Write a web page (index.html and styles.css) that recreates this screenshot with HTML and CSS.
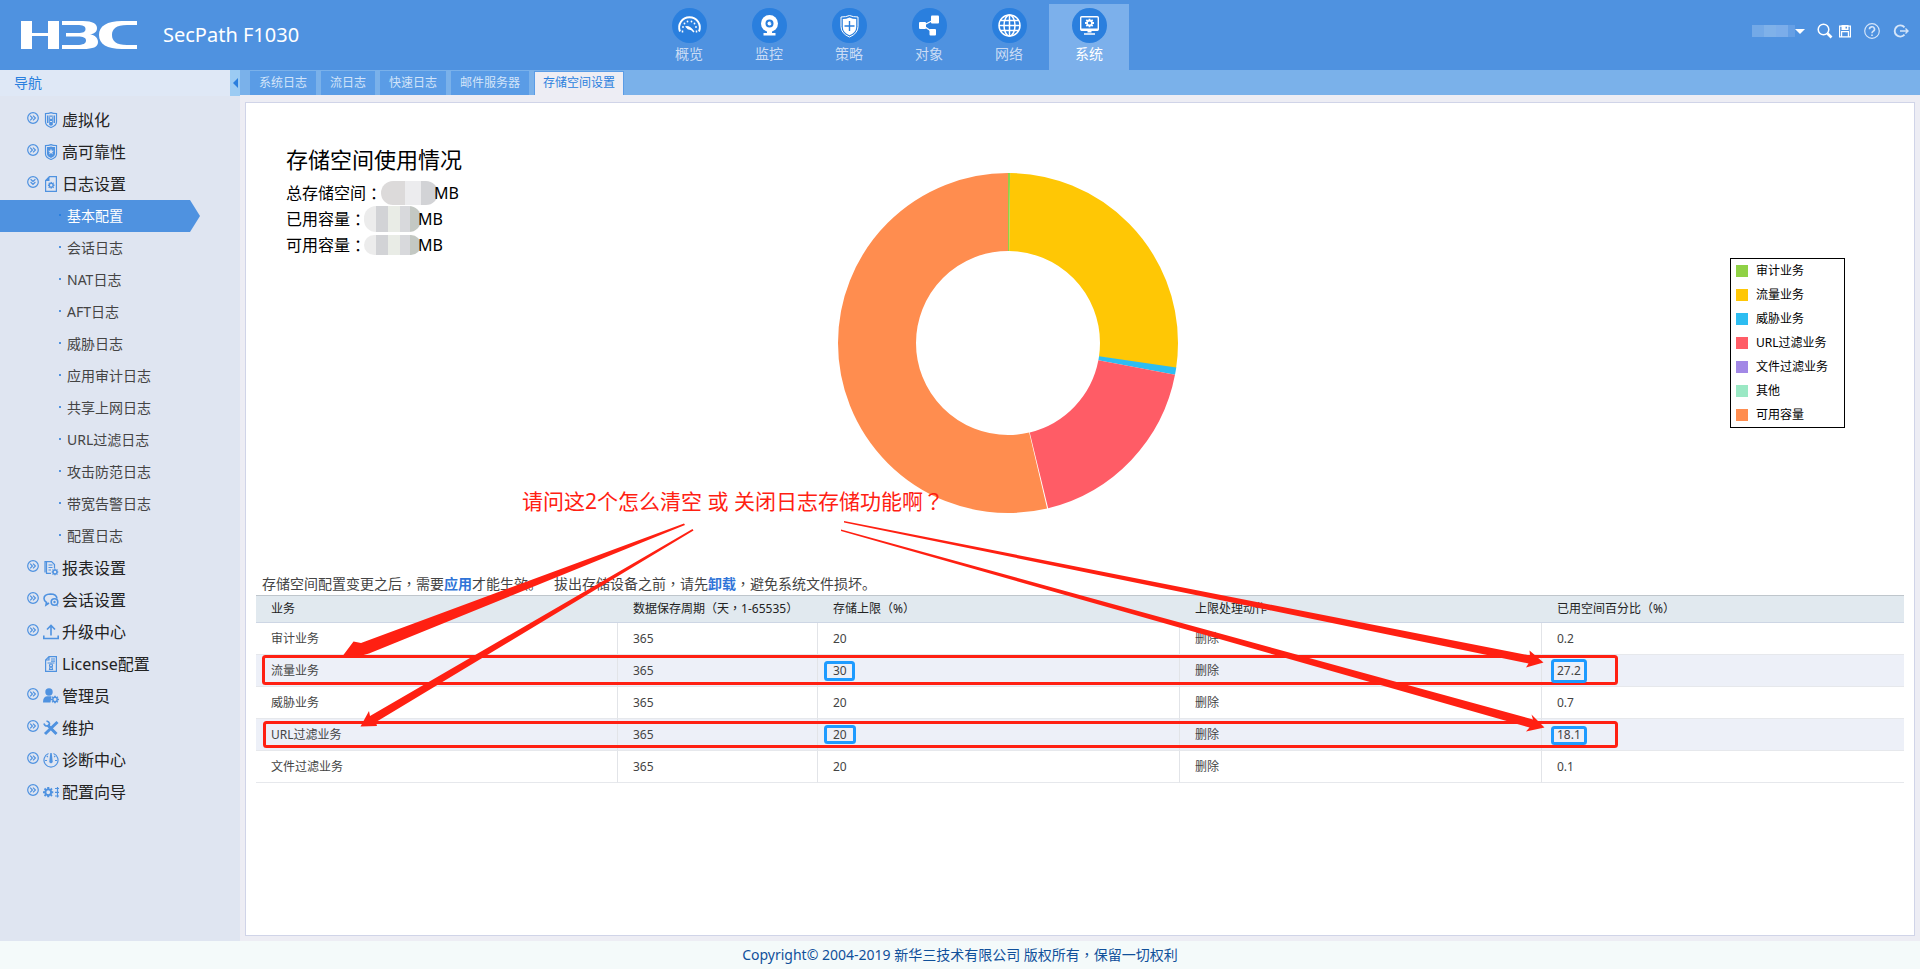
FILE: index.html
```
<!DOCTYPE html>
<html lang="zh-CN">
<head>
<meta charset="utf-8">
<title>SecPath F1030</title>
<link rel="stylesheet" href="styles.css">
</head>
<body>
<svg class="defs" aria-hidden="true">
  <symbol id="more" viewBox="0 0 12 12"><circle cx="6" cy="6" r="5.300"/><path d="M3.200 3.600 5.400 6 3.200 8.400M6 3.600 8.400 6 6 8.400"/></symbol>
  <symbol id="gear" viewBox="0 0 10 10"><path fill-rule="evenodd" d="M4 0h2v1.400l.9.4 1-1 1.300 1.300-1 1 .4.9H10v2H8.600l-.4.9 1 1-1.300 1.300-1-1-.9.4V10H4V8.600l-.9-.4-1 1L.8 7.900l1-1L1.400 6H0V4h1.400l.4-.9-1-1L2.100.8l1 1 .9-.4zM5 3.200a1.800 1.800 0 1 0 0 3.600 1.800 1.800 0 0 0 0-3.600z"/></symbol>
</svg>

<header class="topbar">
  <div class="brand">
    <svg class="logo" viewBox="0 0 116 28" role="img" aria-label="H3C">
      <rect width="11" height="28"/><rect x="27" width="11" height="28"/><rect x="11" y="12" width="16" height="3"/>
      <path d="M41 0H62C72 0 76 3 76 7 76 11 73 13 69 13.500 74 14 77 17 77 21 77 26 72 28 62 28H41V24H56C62 24 65 22.500 65 19.500 65 16.500 62 15.500 57 15.500H45V12H57C62 12 64.500 11 64.500 8 64.500 5 62 4 56 4H41Z"/>
      <path d="M116 0H101C86 0 78 5 78 14 78 23 86 28 101 28H116V24H106C95 24 91 20 91 14 91 8 95 4 106 4H116Z"/>
    </svg>
    <span class="model">SecPath F1030</span>
  </div>
  <nav class="mainnav" aria-label="主菜单">
    <a href="#"><svg viewBox="0 0 35 35"><circle class="disc" cx="17.500" cy="17.500" r="17.500"/><path class="ln" d="M8 23.500A10.300 10.300 0 1 1 27 23.500" stroke-width="2"/><path class="ln" d="M10.500 24.500v-2M24.500 24.500v-2" stroke-width="1.500"/><path class="ln" d="M11 19h0M12.500 15.500h0M15.500 13.500h0M19.500 13.500h0M22.500 15.500h0M24 19h0" stroke-width="1.800" stroke-linecap="round"/><path class="fl" d="M13 18.500q4-2 9.500 5l-1 1q-2.500-3.500-5.500-3z"/></svg>概览</a>
    <a href="#"><svg viewBox="0 0 35 35"><circle class="disc" cx="17.500" cy="17.500" r="17.500"/><circle class="fl" cx="17.500" cy="15.500" r="8.500"/><circle class="bl" cx="17.500" cy="15.500" r="4"/><circle class="fl" cx="17.500" cy="15.500" r="2"/><path class="bl" d="m18 15 3-2v3z"/><path class="fl" d="M15 23h5v2h3.500v2.500h-12V25H15z"/></svg>监控</a>
    <a href="#"><svg viewBox="0 0 35 35"><circle class="disc" cx="17.500" cy="17.500" r="17.500"/><path class="ln" d="M17.500 7.500Q21 9 26 9v9.500q0 7-8.500 10.500Q9 25.500 9 18.500V9q5 0 8.500-1.500z" stroke-width="1"/><path class="fl" d="M17.500 9.500Q21 11 24.200 11v8q0 5.500-6.700 8.300-6.700-2.800-6.700-8.300v-8Q14 11 17.500 9.500z"/><path d="M17.500 13v10M12.500 18h10" stroke="#2a7fde" stroke-width="1.400"/></svg>策略</a>
    <a href="#"><svg viewBox="0 0 35 35"><circle class="disc" cx="17.500" cy="17.500" r="17.500"/><path class="ln" d="M22.500 11.500 11 17.500 20.500 24" stroke-width="1.300"/><rect class="fl" x="19" y="7.500" width="8" height="8" rx="1"/><rect class="fl" x="7" y="14" width="7" height="7" rx="1"/><rect class="fl" x="17.500" y="21" width="6.500" height="6.500" rx="1"/></svg>对象</a>
    <a href="#"><svg viewBox="0 0 35 35"><circle class="disc" cx="17.500" cy="17.500" r="17.500"/><g class="ln" stroke-width="1.500"><circle cx="17.500" cy="17.500" r="10.500"/><ellipse cx="17.500" cy="17.500" rx="5.500" ry="10.500"/><path d="M17.500 7v21M7 17.500h21M9 12.500h17M9 22.500h17"/></g></svg>网络</a>
    <a href="#" class="on" aria-current="page"><svg viewBox="0 0 35 35"><circle class="disc" cx="17.500" cy="17.500" r="17.500"/><rect class="ln" x="8.700" y="8.700" width="17.600" height="13.600" rx="1" stroke-width="1.400"/><path class="fl" d="M9 20.500h17v2H9zM15.500 22h4v2.500h-4zM12 25.300h11v1.500H12z"/><use class="fl" href="#gear" x="13" y="10.500" width="9" height="9"/></svg>系统</a>
  </nav>
  <div class="tools">
    <button class="user" aria-label="用户"><i class="masked"></i><svg width="10" height="5" viewBox="0 0 10 5"><path class="fl" d="M0 0h10L5 5z"/></svg></button>
    <button aria-label="搜索" class="search"><svg width="16" height="16" viewBox="0 0 16 16"><g class="ln"><circle cx="6.500" cy="6.500" r="5.300" stroke-width="1.500"/><path d="m10.500 10.500 4 4" stroke-width="2.600"/></g></svg></button>
    <button aria-label="保存"><svg width="12" height="13" viewBox="0 0 12 13"><path class="ln" d="M.6 1.100h10.800v10.800H.6zM2.600 12V6.600h6.800V12" stroke-width="1.200"/><path class="fl" fill-rule="evenodd" d="M2.500 0h7v5h-7zM6.500 1v2.500H8V1z"/></svg></button>
    <button aria-label="帮助" class="wide"><svg width="16" height="16" viewBox="0 0 16 16"><g class="ln pale"><circle cx="8" cy="8" r="7.300" stroke-width="1.200"/><path d="M5.500 6.300a2.500 2.400 0 1 1 3.700 2Q8 9 8 10.300M8 11.400v1.500" stroke-width="1.600"/></g></svg></button>
    <button aria-label="退出" class="wide"><svg width="16" height="14" viewBox="0 0 16 14"><g class="ln pale"><path d="M11.500 3.300a5.600 5.600 0 1 0 0 7.400" stroke-width="1.900"/><path d="M7 7h8M12.500 4.500 15 7l-2.500 2.500" stroke-width="1.400"/></g></svg></button>
  </div>
</header>

<div class="body">
  <aside class="sidebar">
    <div class="sidehead"><span>导航</span><button class="fold" aria-label="收起导航"><svg width="5" height="10" viewBox="0 0 5 10"><path d="M5 0v10L0 5z"/></svg></button></div>
    <nav class="tree" aria-label="导航">
      <a href="#" class="top"><svg class="more"><use href="#more"/></svg><svg class="ico" viewBox="0 0 16 16"><path class="st" d="M2.500 1.500Q6 1.500 8 .6q2 .9 5.500.9V10q0 3.500-5.500 5.500Q2.500 13.500 2.500 10z"/><path d="M4 3.500h1.500V11H4zM6.200 3.500h3.600V13l-1.800.8-1.800-.8zM10.500 3.500H12V11h-1.500z"/><path class="bgst" d="M7 4.500 8 7l1-2.500M7 9.500h2"/></svg>虚拟化</a>
      <a href="#" class="top"><svg class="more"><use href="#more"/></svg><svg class="ico" viewBox="0 0 16 16"><path class="st" d="M2.500 1.500Q6 1.500 8 .6q2 .9 5.500.9V10q0 3.500-5.500 5.500Q2.500 13.500 2.500 10z"/><path fill-rule="evenodd" d="M4 3q2.500 0 4-.6Q9.500 3 12 3v7q0 2.300-4 4-4-1.700-4-4zm4 1.500L7.200 6.800H5l1.800 1.400-.7 2.300L8 9.100l1.900 1.400-.7-2.300L11 6.800H8.800z"/></svg>高可靠性</a>
      <a href="#" class="top open"><svg class="more"><use href="#more"/></svg><svg class="ico" viewBox="0 0 16 16"><path class="st" d="M6.500.6h6.900v14.800H2.600V4.500z"/><path d="M2 5 6.500 0v5z"/><use href="#gear" x="4.700" y="5.700" width="7" height="7"/></svg>日志设置</a>
      <a href="#" class="sub on" aria-current="page">基本配置</a>
      <a href="#" class="sub">会话日志</a>
      <a href="#" class="sub">NAT日志</a>
      <a href="#" class="sub">AFT日志</a>
      <a href="#" class="sub">威胁日志</a>
      <a href="#" class="sub">应用审计日志</a>
      <a href="#" class="sub">共享上网日志</a>
      <a href="#" class="sub">URL过滤日志</a>
      <a href="#" class="sub">攻击防范日志</a>
      <a href="#" class="sub">带宽告警日志</a>
      <a href="#" class="sub">配置日志</a>
      <a href="#" class="top"><svg class="more"><use href="#more"/></svg><svg class="ico" viewBox="0 0 16 16"><path class="st" d="M8 13.400H3.500V1.600H2v10.800M3.500 1.600h5l3 3v4M5.500 5h4M5.500 7.500h4M5.500 10h2.500"/><use href="#gear" x="8.500" y="8.500" width="7" height="7"/></svg>报表设置</a>
      <a href="#" class="top"><svg class="more"><use href="#more"/></svg><svg class="ico" viewBox="0 0 16 16"><path class="st bold" d="M14 6.500Q13.500 2 7.500 2 1 2.300 1 6.500q0 2.500 2.500 4L3 13l3-2"/><circle class="st bold" cx="11.500" cy="10" r="3.300"/><circle cx="11.500" cy="10" r="1.200"/><path d="m13 12 2.500 2.500-1.500-.2z"/></svg>会话设置</a>
      <a href="#" class="top"><svg class="more"><use href="#more"/></svg><svg class="ico" viewBox="0 0 16 16"><path class="st bold" d="M8 11.500V2M4 5.500l4-4 4 4M.8 11.500v3h14.400v-3"/></svg>升级中心</a>
      <a href="#" class="top leaf"><svg class="ico" viewBox="0 0 16 16"><path class="st" d="M6 .6h7.400v14.800H2.600V4zM6 .6V4H2.600M8 3h4M8 5.200h4M4.500 7h7"/><circle class="st" cx="8" cy="9.500" r="1.500"/><path class="st" d="M6.500 13.500 7 11h2l.5 2.500z"/></svg>License配置</a>
      <a href="#" class="top"><svg class="more"><use href="#more"/></svg><svg class="ico" viewBox="0 0 16 16"><circle cx="6" cy="4" r="3.700"/><path d="M0 14.500Q0 8.500 4 8.300h4.500L7.500 14.500z"/><use href="#gear" x="8" y="7.500" width="8" height="8"/></svg>管理员</a>
      <a href="#" class="top"><svg class="more"><use href="#more"/></svg><svg class="ico" viewBox="0 0 16 16"><path class="st fat" d="M2 14 14.500 2M4.500 5l9 9"/><path class="st bold" d="M1 3.500Q1.500 6 4 6T6.500 3.500Q6 1.500 3.500 1"/></svg>维护</a>
      <a href="#" class="top"><svg class="more"><use href="#more"/></svg><svg class="ico" viewBox="0 0 16 16"><path class="st" d="M5.500 1.500a7 7 0 1 0 5 0M2 8.500h2M12 8.500h2M3.800 4l1 1M12.200 4l-1 1"/><path d="M7.300 1h1.400l1 8.500a1.700 1.700 0 1 1-3.400 0z"/></svg>诊断中心</a>
      <a href="#" class="top"><svg class="more"><use href="#more"/></svg><svg class="ico" viewBox="0 0 16 16"><use href="#gear" x="0" y="3" width="10.500" height="10.500"/><path class="st" d="M14.500 3v10.500M12 4.500h4M12 8.300h4M12 12h4"/></svg>配置向导</a>
    </nav>
  </aside>

  <main class="main">
    <nav class="tabs" aria-label="标签">
      <a href="#">系统日志</a><a href="#">流日志</a><a href="#">快速日志</a><a href="#">邮件服务器</a><a href="#" class="on" aria-current="page">存储空间设置</a>
    </nav>
    <section class="panel">
      <div class="overview">
        <div class="usage">
          <div class="info">
            <h1>存储空间使用情况</h1>
            <p>总存储空间<span class="pt" lang="zh-TW">：</span><i class="mosaic first"></i>MB</p>
            <p>已用容量<span class="pt" lang="zh-TW">：</span><i class="mosaic"></i>MB</p>
            <p>可用容量<span class="pt" lang="zh-TW">：</span><i class="mosaic third"></i>MB</p>
          </div>
          <svg class="donut" viewBox="0 0 340 340" role="img" aria-label="存储空间使用情况">
            <g fill="none" stroke-width="78" transform="rotate(-90 170 170)">
              <circle cx="170" cy="170" r="131" pathLength="100" stroke="#ffc705" stroke-dasharray="27.200 100" stroke-dashoffset="-.2"/>
              <circle cx="170" cy="170" r="131" pathLength="100" stroke="#2dbdf1" stroke-dasharray=".7 100" stroke-dashoffset="-27.300"/>
              <circle cx="170" cy="170" r="131" pathLength="100" stroke="#ff5c66" stroke-dasharray="18.200 100" stroke-dashoffset="-28"/>
              <circle cx="170" cy="170" r="131" pathLength="100" stroke="#ff8d4f" stroke-dasharray="53.700 100" stroke-dashoffset="-46.300"/>
              <circle cx="170" cy="170" r="131" pathLength="100" stroke="#8fd145" stroke-dasharray=".2 100"/>
            </g>
          </svg>
        </div>
        <ul class="legend">
          <li class="c1">审计业务</li><li class="c2">流量业务</li><li class="c3">威胁业务</li><li class="c4">URL过滤业务</li><li class="c5">文件过滤业务</li><li class="c6">其他</li><li class="c7">可用容量</li>
        </ul>
      </div>
      <div class="storage">
        <p class="note"><span>存储空间配置变更之后<span class="pt" lang="zh-TW">，</span>需要<a href="#">应用</a>才能生效。</span><span>拔出存储设备之前<span class="pt" lang="zh-TW">，</span>请先<a href="#">卸载</a><span class="pt" lang="zh-TW">，</span>避免系统文件损坏。</span></p>
        <table>
          <thead><tr><th>业务</th><th class="days">数据保存周期<span class="pt" lang="zh-TW">（</span>天<span class="pt" lang="zh-TW">，</span>1-65535<span class="pt" lang="zh-TW">）</span></th><th>存储上限<span class="pt" lang="zh-TW">（</span>%<span class="pt" lang="zh-TW">）</span></th><th>上限处理动作</th><th>已用空间百分比<span class="pt" lang="zh-TW">（</span>%<span class="pt" lang="zh-TW">）</span></th></tr></thead>
          <tbody>
            <tr><td>审计业务</td><td>365</td><td>20</td><td>删除</td><td>0.2</td></tr>
            <tr><td>流量业务</td><td>365</td><td>30</td><td>删除</td><td>27.2</td></tr>
            <tr><td>威胁业务</td><td>365</td><td>20</td><td>删除</td><td>0.7</td></tr>
            <tr><td>URL过滤业务</td><td>365</td><td>20</td><td>删除</td><td>18.1</td></tr>
            <tr><td>文件过滤业务</td><td>365</td><td>20</td><td>删除</td><td>0.1</td></tr>
          </tbody>
        </table>
      </div>
    </section>
  </main>
</div>
<footer class="foot">Copyright© 2004-2019 新华三技术有限公司 版权所有<span class="pt" lang="zh-TW">，</span>保留一切权利</footer>

<div class="markup">
  <svg class="arrows" aria-hidden="true">
    <g class="redbox"><rect x="263.500" y="656.500" width="1353" height="27" rx="2"/><rect x="264.500" y="722.500" width="1352" height="24" rx="2"/></g>
    <g class="redfill">
      <path d="M684 523.500 361 643 353.500 641.500 343 655.500 360 656 369 653.500 685 525z"/>
      <path d="M692.500 529 370 716 369 711 360.500 726.500 377 726 376 722 693.500 530.500z"/>
      <path d="M844 521 1530 655.500 1529.500 650.500 1543.500 662.500 1526 667.500 1528.500 663.500 844 522.500z"/>
      <path d="M841 529.500 1533 719.500 1531.500 714.500 1544.500 727.500 1526 731.500 1529.500 727.500 841 531z"/>
    </g>
    <g class="bluebox"><rect x="825.500" y="662.500" width="28" height="17" rx="2"/><rect x="825.500" y="726.500" width="29" height="16" rx="2"/><rect x="1552.500" y="660.500" width="33" height="21" rx="2"/><rect x="1552.500" y="727.500" width="33" height="16" rx="2"/></g>
  </svg>
  <p class="question">请问这2个怎么清空 或 关闭日志存储功能啊<span class="pt" lang="zh-TW">？</span></p>
</div>
</body>
</html>
```
FILE: styles.css
```
* { box-sizing: border-box; }
body {
  margin: 0; min-height: 100vh; position: relative;
  display: flex; flex-direction: column;
  font: 14px/20px "Noto Sans", "Noto Sans CJK SC", sans-serif;
  color: #444; background: #ededf4;
}
a { color: inherit; text-decoration: none; }
button { padding: 0; border: 0; background: none; color: inherit; font: inherit; display: flex; align-items: center; }
svg { display: block; flex: none; }
p, h1, ul { margin: 0; padding: 0; font-weight: normal; }
.defs { position: absolute; width: 0; height: 0; }
.pt { font-family: "Noto Sans CJK TC", sans-serif; line-height: 1; }
.fl { fill: #fff; }
.bl, .disc { fill: #2a7fde; }
.ln { fill: none; stroke: #fff; }
.pale { stroke: #d5e5f9; }

.topbar { height: 70px; background: #4f92e0; display: grid; grid-template-columns: 649fr 480px 791fr; }
.brand { display: flex; align-items: center; gap: 26px; padding-left: 21px; color: #fff; }
.logo { width: 116px; height: 28px; fill: #fff; }
.model { font-size: 20px; line-height: 28px; }
.mainnav { display: flex; padding-top: 4px; }
.mainnav a { width: 80px; display: flex; flex-direction: column; align-items: center; padding-top: 4px; color: #cadcf5; }
.mainnav svg { width: 35px; height: 35px; margin-bottom: 1px; }
.mainnav .on { background: #7cb0eb; color: #fff; }
.tools { display: flex; justify-content: flex-end; align-items: center; gap: 8px; padding: 0 11px 8px 0; }
.tools .user { margin-right: 4px; }
.tools .search { margin-right: -2px; }
.tools .wide { margin-left: 5px; }
.masked { width: 43px; height: 12px; background: linear-gradient(90deg, #73a9e7 12px, #7fb1e9 12px 24px, #7badea 24px 36px, #659fe5 36px); }

.body { flex: 1; display: flex; }
.sidebar { width: 240px; background: #dfe5f1; }
.sidehead { height: 26px; display: flex; justify-content: space-between; background: #dfe8f6; color: #2a7fde; padding-left: 14px; line-height: 26px; }
.fold { width: 10px; background: #9bcbf3; justify-content: center; fill: #2a7fde; }
.tree { padding-top: 8px; display: flex; flex-direction: column; fill: #4f92e0; }
.tree a { height: 32px; line-height: 32px; display: flex; align-items: center; }
.top { padding-left: 27px; font-size: 16px; color: #222; }
.tree .leaf { padding-left: 43px; }
.more { width: 12px; height: 12px; margin: 0 4px 4px 0; fill: none; stroke: #4f92e0; stroke-width: 1.2; }
.open .more { transform: rotate(90deg); }
.ico { width: 16px; height: 16px; margin-right: 3px; }
.st { fill: none; stroke: #4f92e0; stroke-width: 1.2; }
.bold { stroke-width: 1.6; }
.fat { stroke-width: 3; }
.bgst { fill: none; stroke: #dfe5f1; }
.sub::before { content: ""; width: 2px; height: 2px; margin: 0 6px 2px 59px; background: #4f92e0; }
.sub.on { width: 200px; color: #fff; background: #4f92e0; clip-path: polygon(0 0, 190px 0, 100% 50%, 190px 100%, 0 100%); }
.sub.on::before { background: #2a7fde; }

.main { flex: 1; min-width: 0; display: flex; flex-direction: column; }
.tabs { height: 25px; padding: 1px 0 0 10px; display: flex; gap: 5px; background: #7ab1ea; font-size: 12px; line-height: 24px; }
.tabs a { padding: 0 9px; background: #5a9ce6; color: #d3e4f9; }
.tabs .on { padding: 0 8px; border: 1px solid #5a9ce6; border-bottom: 0; line-height: 22px; background: #ededf4; color: #2a7fde; }
.panel { flex: 1; margin: 7px 5px 5px; background: #fff; border: 1px solid #d0d4e8; }
.overview { display: flex; align-items: flex-end; padding: 40px 69px 0 40px; }
.usage { flex: 1; display: grid; grid-template-columns: 1fr 340px 1fr; color: #000; }
.info h1 { font-size: 22px; line-height: 32px; margin-bottom: 5px; }
.info p { font-size: 16px; line-height: 26px; display: flex; align-items: center; }
.mosaic { width: 57px; height: 26px; margin: 0 -3px 0 -2px; border-radius: 12px; background: linear-gradient(90deg, #ececec 12px, #d2d3d6 12px 24px, #e9ece6 24px 36px, #d8d9dc 36px 46px, #c3c8c3 46px); }
.mosaic.first { margin: 0 -4px 0 -1px; height: 24px; background: linear-gradient(90deg, #dcdada 24px, #ececee 24px 40px, #d2d3d6 40px); }
.mosaic.third { height: 20px; }
.donut { width: 340px; height: 340px; margin-top: 30px; }
.legend { width: 115px; height: 170px; border: 1px solid #000; margin-bottom: 85px; list-style: none; font-size: 12px; color: #000; }
.legend li { height: 24px; line-height: 24px; padding-left: 5px; display: flex; align-items: center; gap: 8px; }
.legend li::before { content: ""; width: 12px; height: 12px; background: currentColor; }
.c1::before { color: #8fd145; } .c2::before { color: #ffc705; } .c3::before { color: #2dbdf1; }
.c4::before { color: #ff5c66; } .c5::before { color: #a288e6; } .c6::before { color: #9ae8c4; } .c7::before { color: #ff8d4f; }

.storage { padding: 60px 10px 0; }
.note { display: flex; gap: 12px; padding-left: 6px; height: 22px; line-height: 22px; }
.note a { color: #2f74d8; font-weight: bold; }
table { width: 100%; table-layout: fixed; border-spacing: 0; font-size: 12px; line-height: 18px; }
th, td { padding: 0 0 0 15px; text-align: left; font-weight: normal; border-bottom: 1px solid #e6e8ec; }
th { height: 28px; color: #222; background: #e1e9ef; border-top: 1px solid #bfc6cc; border-bottom-color: #cdd6e4; }
.days { width: 200px; }
td { height: 32px; border-right: 1px solid #e2e4e8; }
td:last-child { border-right: 0; }
tbody tr:nth-child(even) { background: #edf0f8; }
.foot { height: 28px; line-height: 28px; text-align: center; background: #f4fafa; color: #10509a; }

.markup { position: absolute; inset: 0; pointer-events: none; }
.arrows { width: 100%; height: 100%; }
.redbox, .bluebox { fill: none; stroke: #ff2012; stroke-width: 3; }
.bluebox { stroke: #1e9bff; }
.redfill { fill: #ff2012; }
.question { position: absolute; left: 522px; top: 486px; font-size: 21px; line-height: 30px; white-space: nowrap; color: #ff2012; }
```
